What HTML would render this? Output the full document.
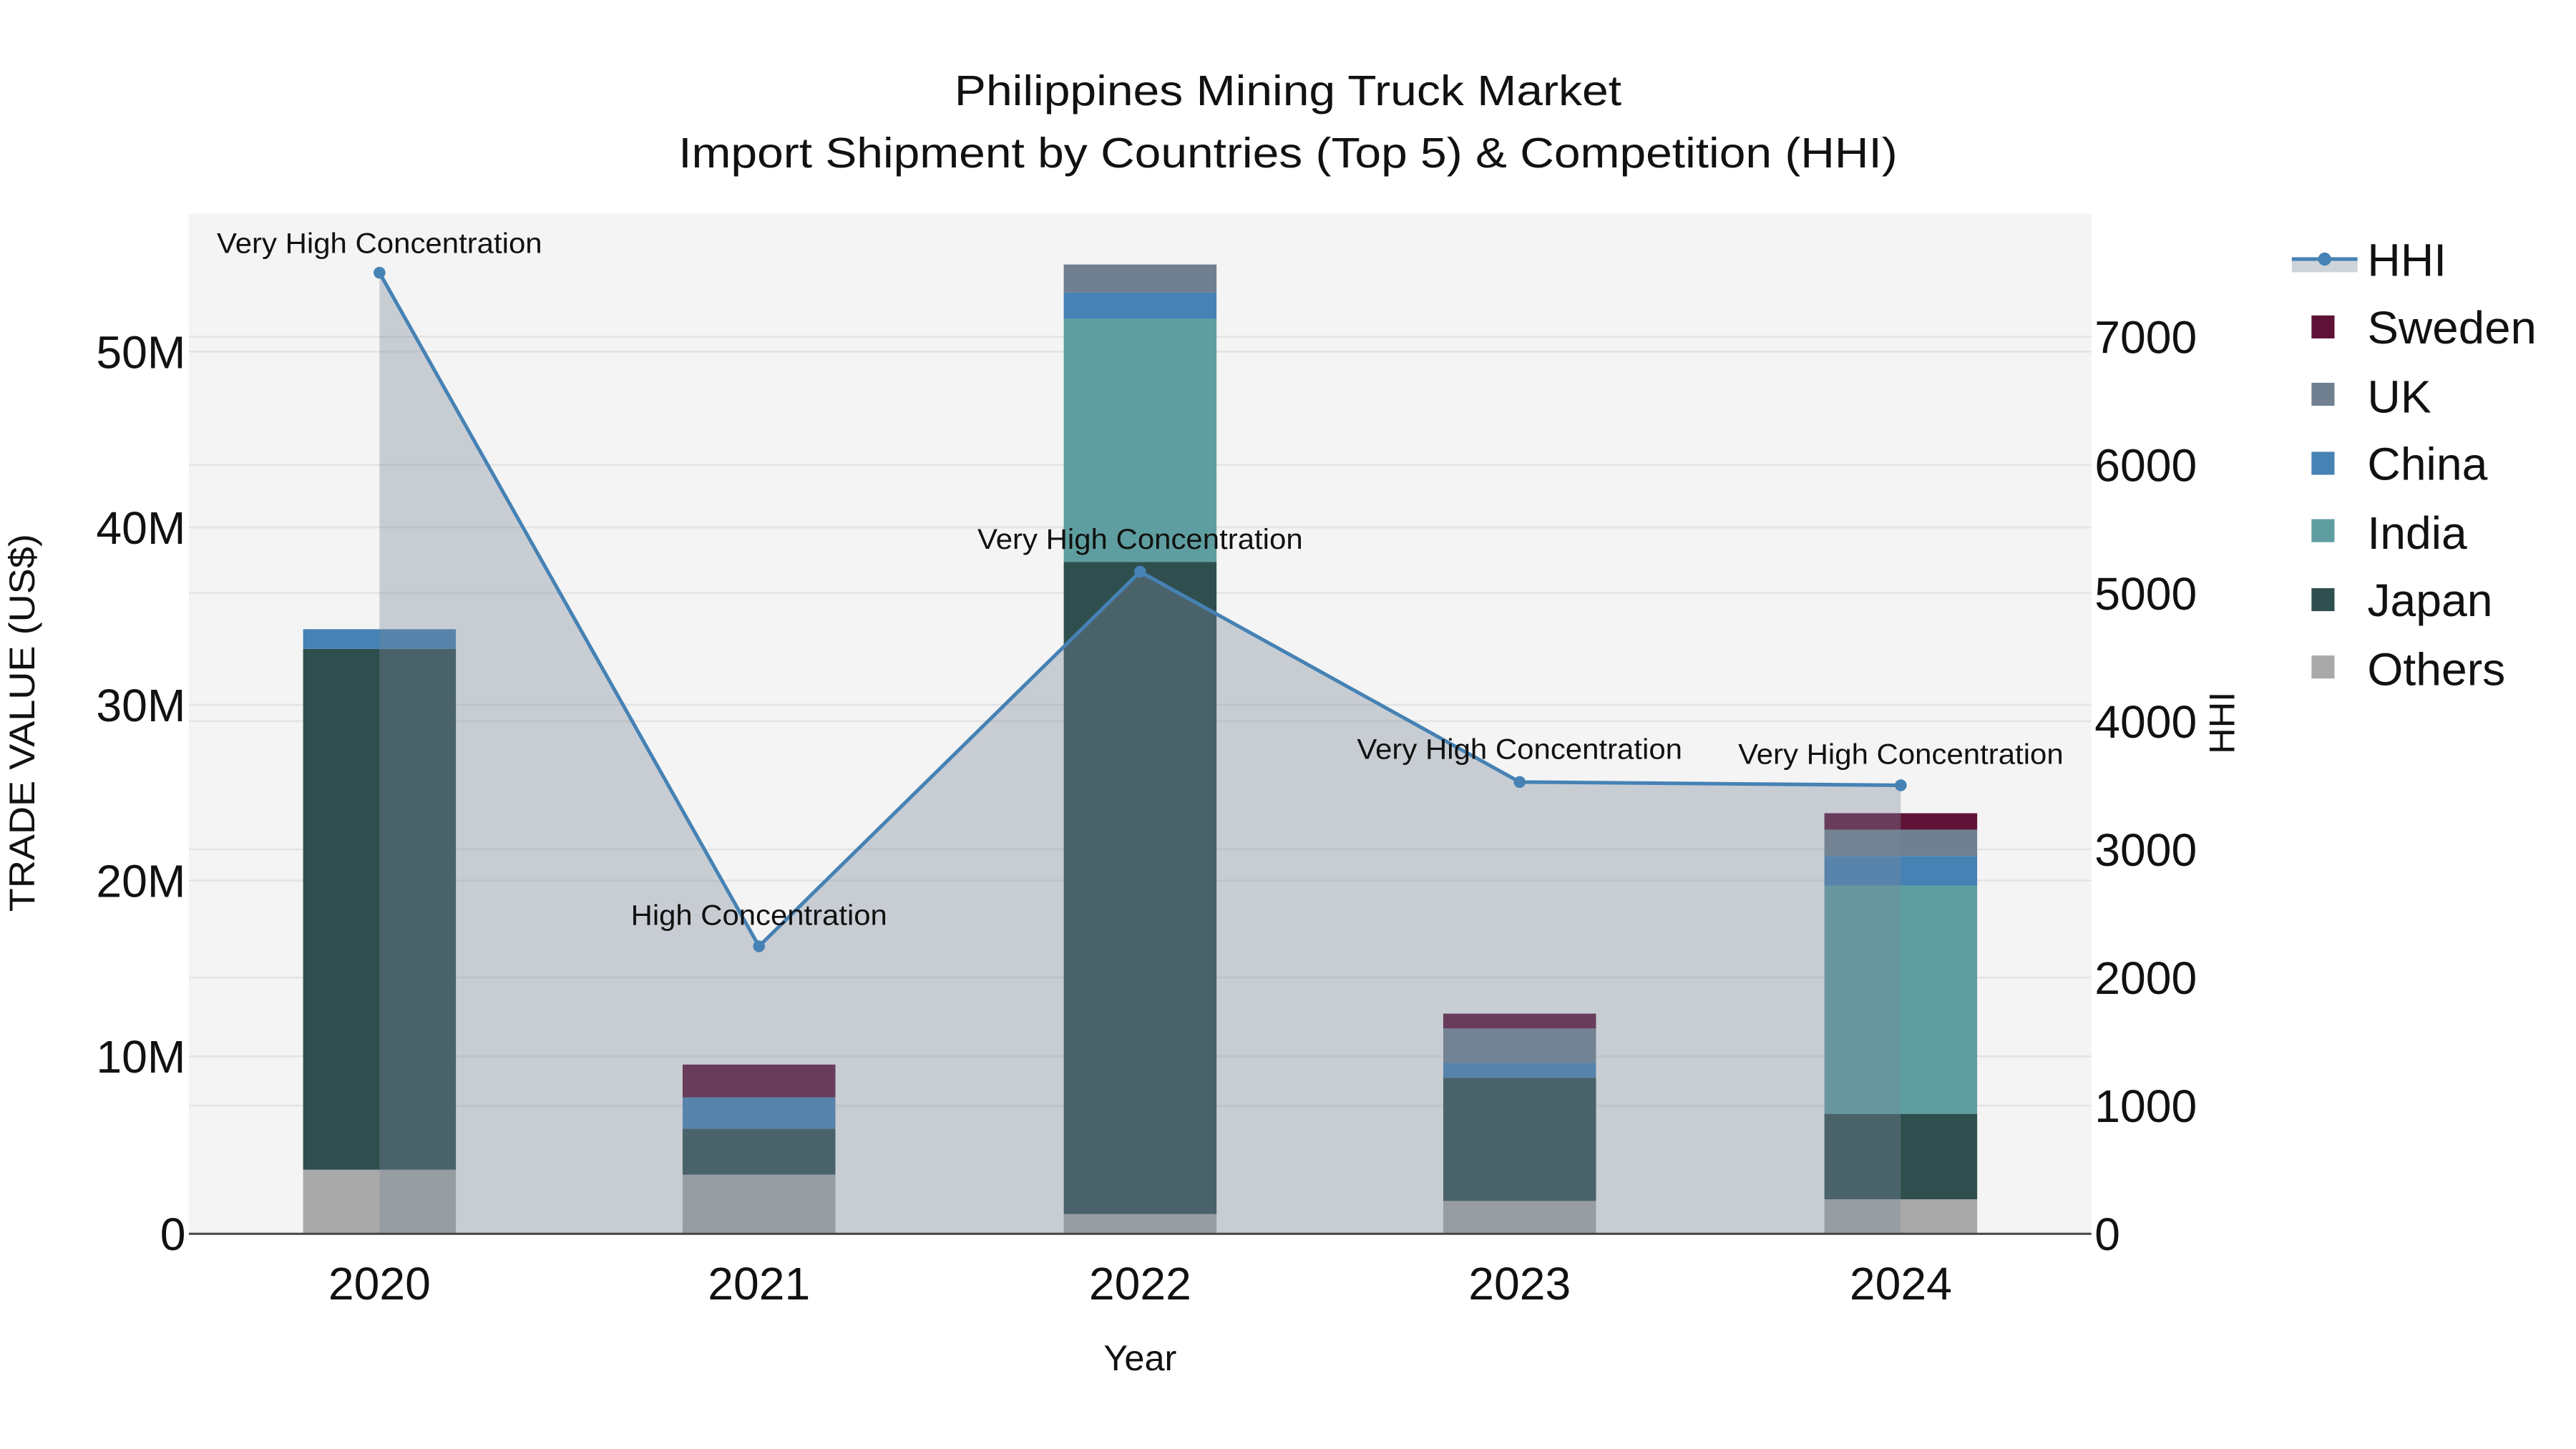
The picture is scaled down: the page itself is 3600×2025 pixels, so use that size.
<!DOCTYPE html>
<html><head><meta charset="utf-8"><style>html,body{margin:0;padding:0;background:#fff}svg{display:block}text{font-family:"Liberation Sans",Arial,sans-serif;fill:#111}</style></head>
<body>
<svg width="3600" height="2025" viewBox="0 0 1568 882" preserveAspectRatio="none" xmlns="http://www.w3.org/2000/svg">
<rect x="0" y="0" width="1568" height="882" fill="#fff"/>
<rect x="115" y="130" width="1158" height="621" fill="#f4f4f4"/>
<g stroke="#e4e4e4" stroke-width="1.2">
<line x1="115" x2="1273" y1="214" y2="214"/><line x1="115" x2="1273" y1="321" y2="321"/><line x1="115" x2="1273" y1="429" y2="429"/><line x1="115" x2="1273" y1="536" y2="536"/><line x1="115" x2="1273" y1="643" y2="643"/>
<line x1="115" x2="1273" y1="205" y2="205"/><line x1="115" x2="1273" y1="283" y2="283"/><line x1="115" x2="1273" y1="361" y2="361"/><line x1="115" x2="1273" y1="439" y2="439"/><line x1="115" x2="1273" y1="517" y2="517"/><line x1="115" x2="1273" y1="595" y2="595"/><line x1="115" x2="1273" y1="673" y2="673"/>
</g>
<rect x="184.5" y="712" width="93" height="39" fill="#a9a9a9"/>
<rect x="184.5" y="395" width="93" height="317" fill="#2f4f4f"/>
<rect x="184.5" y="383" width="93" height="12" fill="#4682b4"/>
<rect x="415.5" y="715" width="93" height="36" fill="#a9a9a9"/>
<rect x="415.5" y="687" width="93" height="28" fill="#2f4f4f"/>
<rect x="415.5" y="668" width="93" height="19" fill="#4682b4"/>
<rect x="415.5" y="648" width="93" height="20" fill="#5f1236"/>
<rect x="647.5" y="739" width="93" height="12" fill="#a9a9a9"/>
<rect x="647.5" y="342" width="93" height="397" fill="#2f4f4f"/>
<rect x="647.5" y="194" width="93" height="148" fill="#5f9ea0"/>
<rect x="647.5" y="178" width="93" height="16" fill="#4682b4"/>
<rect x="647.5" y="161" width="93" height="17" fill="#708090"/>
<rect x="878.5" y="731" width="93" height="20" fill="#a9a9a9"/>
<rect x="878.5" y="656" width="93" height="75" fill="#2f4f4f"/>
<rect x="878.5" y="647" width="93" height="9" fill="#4682b4"/>
<rect x="878.5" y="626" width="93" height="21" fill="#708090"/>
<rect x="878.5" y="617" width="93" height="9" fill="#5f1236"/>
<rect x="1110.5" y="730" width="93" height="21" fill="#a9a9a9"/>
<rect x="1110.5" y="678" width="93" height="52" fill="#2f4f4f"/>
<rect x="1110.5" y="539" width="93" height="139" fill="#5f9ea0"/>
<rect x="1110.5" y="521" width="93" height="18" fill="#4682b4"/>
<rect x="1110.5" y="505" width="93" height="16" fill="#708090"/>
<rect x="1110.5" y="495" width="93" height="10" fill="#5f1236"/>
<polygon points="231,751 231,166 462,576 694,348 925,476 1157,478 1157,751" fill="rgb(122,135,155)" fill-opacity="0.36"/>
<polyline points="231,166 462,576 694,348 925,476 1157,478" fill="none" stroke="#4682b4" stroke-width="2.2"/>
<g fill="#4682b4"><circle cx="231" cy="166" r="3.6"/><circle cx="462" cy="576" r="3.6"/><circle cx="694" cy="348" r="3.6"/><circle cx="925" cy="476" r="3.6"/><circle cx="1157" cy="478" r="3.6"/></g>
<line x1="115" x2="1273" y1="751" y2="751" stroke="#444" stroke-width="1.3"/>
<g font-size="17.5" text-anchor="middle">
<text x="231" y="154" textLength="198" lengthAdjust="spacingAndGlyphs">Very High Concentration</text>
<text x="462" y="563" textLength="156" lengthAdjust="spacingAndGlyphs">High Concentration</text>
<text x="694" y="334" textLength="198" lengthAdjust="spacingAndGlyphs">Very High Concentration</text>
<text x="925" y="462" textLength="198" lengthAdjust="spacingAndGlyphs">Very High Concentration</text>
<text x="1157" y="465" textLength="198" lengthAdjust="spacingAndGlyphs">Very High Concentration</text>
</g>
<g text-anchor="middle" font-size="26">
<text x="784" y="64" textLength="406" lengthAdjust="spacingAndGlyphs">Philippines Mining Truck Market</text>
<text x="784" y="102" textLength="742" lengthAdjust="spacingAndGlyphs">Import Shipment by Countries (Top 5) &amp; Competition (HHI)</text>
</g>
<g font-size="28" text-anchor="end">
<text x="113" y="224">50M</text><text x="113" y="331">40M</text><text x="113" y="439">30M</text><text x="113" y="546">20M</text><text x="113" y="653">10M</text><text x="113" y="761">0</text>
</g>
<g font-size="28" text-anchor="start">
<text x="1275" y="215">7000</text><text x="1275" y="293">6000</text><text x="1275" y="371">5000</text><text x="1275" y="449">4000</text><text x="1275" y="527">3000</text><text x="1275" y="605">2000</text><text x="1275" y="683">1000</text><text x="1275" y="761">0</text>
</g>
<g font-size="28" text-anchor="middle">
<text x="231" y="782" dy="9">2020</text><text x="462" y="782" dy="9">2021</text><text x="694" y="782" dy="9">2022</text><text x="925" y="782" dy="9">2023</text><text x="1157" y="782" dy="9">2024</text>
</g>
<text x="694" y="834" font-size="22" text-anchor="middle">Year</text>
<text transform="translate(21,440) rotate(-90)" font-size="22" text-anchor="middle" textLength="230" lengthAdjust="spacingAndGlyphs">TRADE VALUE (US$)</text>
<text transform="translate(1360,440) rotate(-90)" font-size="22" text-anchor="middle">HHI</text>
<rect x="1395" y="157.7" width="40" height="8" fill="rgb(122,135,155)" fill-opacity="0.36"/>
<line x1="1395" x2="1435" y1="157.7" y2="157.7" stroke="#4682b4" stroke-width="2.2"/>
<circle cx="1415" cy="157.7" r="4" fill="#4682b4"/>
<rect x="1407" y="192" width="14" height="14" fill="#5f1236"/>
<rect x="1407" y="233" width="14" height="14" fill="#708090"/>
<rect x="1407" y="275" width="14" height="14" fill="#4682b4"/>
<rect x="1407" y="316" width="14" height="14" fill="#5f9ea0"/>
<rect x="1407" y="358" width="14" height="14" fill="#2f4f4f"/>
<rect x="1407" y="399" width="14" height="14" fill="#a9a9a9"/>
<g font-size="28">
<text x="1441" y="168">HHI</text>
<text x="1441" y="209" textLength="103" lengthAdjust="spacingAndGlyphs">Sweden</text>
<text x="1441" y="251">UK</text>
<text x="1441" y="292">China</text>
<text x="1441" y="334">India</text>
<text x="1441" y="375">Japan</text>
<text x="1441" y="417">Others</text>
</g>
</svg>
</body></html>
